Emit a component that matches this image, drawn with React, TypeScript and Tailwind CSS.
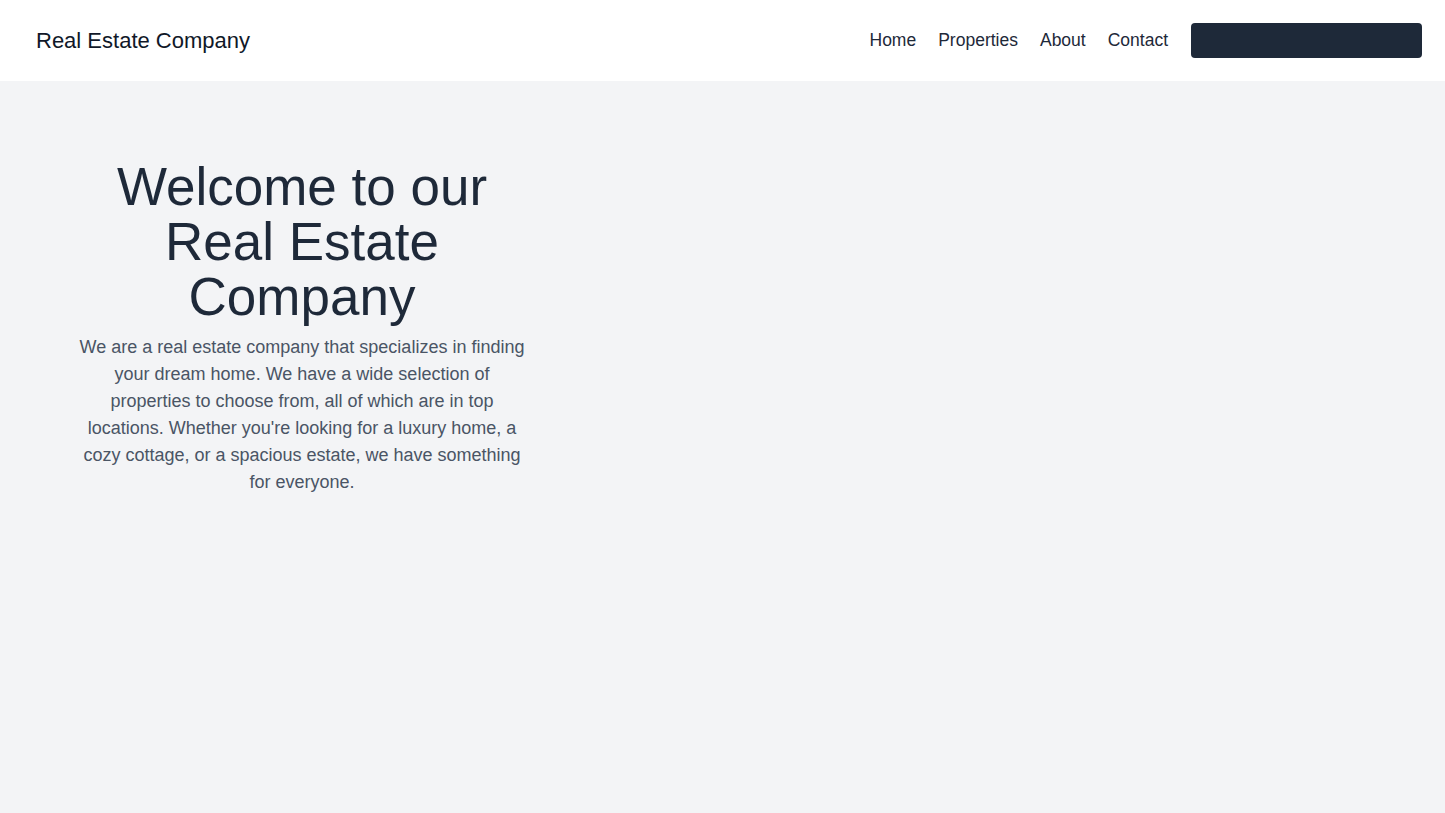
const navLinks = ['Home', 'Properties', 'About', 'Contact'];

export default function App() {
  return (
    <div className="min-h-screen bg-[#f3f4f6] font-['Liberation_Sans',Arial,sans-serif]">
      <header className="h-[81px] bg-white flex items-center justify-between pl-9 pr-[23px]">
        <a href="#" className="text-[22px] text-gray-900">
          Real Estate Company
        </a>
        <nav className="flex items-center">
          <ul className="flex items-center gap-[22px] text-[17.5px] text-gray-800">
            {navLinks.map((link) => (
              <li key={link}>
                <a href="#">{link}</a>
              </li>
            ))}
          </ul>
          <button className="ml-[23px] w-[231px] h-[35px] bg-gray-800 rounded-[4px]" />
        </nav>
      </header>

      <section className="pt-[78px] pl-[78px]">
        <div className="w-[448px] text-center">
          <h1 className="text-[53px] leading-[55px] text-gray-800">
            Welcome to our Real Estate Company
          </h1>
          <p className="mt-[10px] text-lg leading-[27px] text-gray-600">
            We are a real estate company that specializes in finding your dream home. We have a wide
            selection of properties to choose from, all of which are in top locations. Whether
            you're looking for a luxury home, a cozy cottage, or a spacious estate, we have
            something for everyone.
          </p>
        </div>
      </section>
    </div>
  );
}
